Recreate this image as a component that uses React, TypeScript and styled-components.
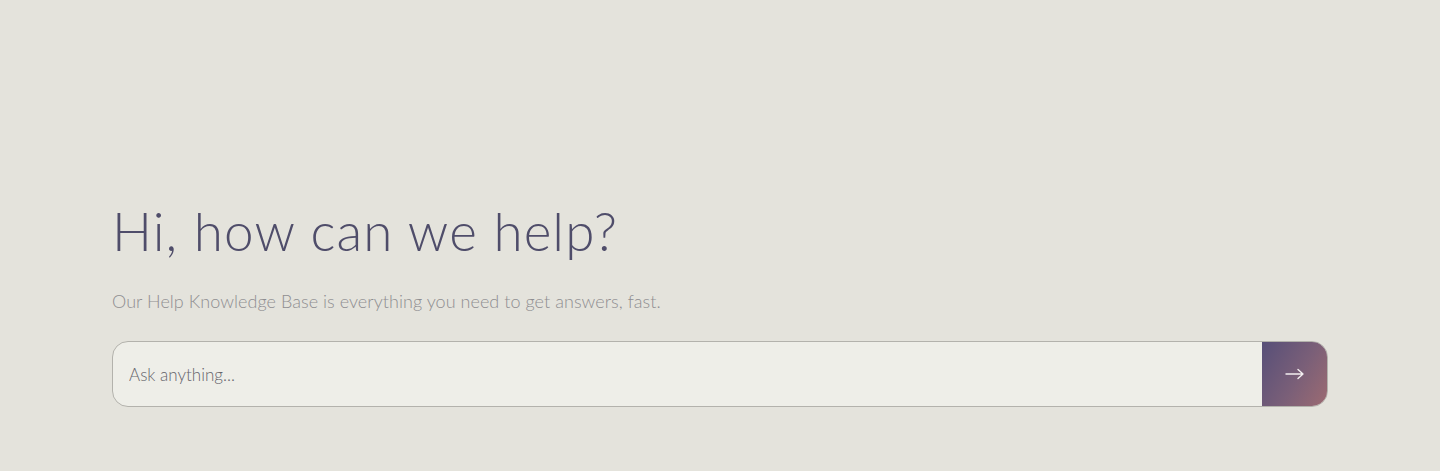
import React from "react";
import styled, { createGlobalStyle } from "styled-components";

const Global = createGlobalStyle`
  html, body { margin: 0; padding: 0; background: #e4e3dc; }
  body { font-family: "Lato", "Open Sans", sans-serif; }
  * { box-sizing: border-box; }
`;

const Page = styled.main`
  min-height: 471px;
  background: #e4e3dc;
  padding: 196px 112px 0 112px;
`;

const Hero = styled.section`
  display: flex;
  flex-direction: column;
  width: 1216px;
`;

const Title = styled.h1`
  margin: 0;
  font-family: "Lato", sans-serif;
  font-weight: 300;
  font-size: 53px;
  line-height: 70px;
  color: #4f4d6a;
  letter-spacing: 1.1px;
`;

const Subtitle = styled.p`
  margin: 23px 0 0 0;
  font-family: "Lato", sans-serif;
  font-weight: 300;
  font-size: 18px;
  line-height: 24px;
  color: #8f8e91;
  letter-spacing: 0.05px;
`;

const SearchForm = styled.form`
  margin-top: 28px;
  display: flex;
  height: 66px;
  border: 1px solid #b3b2ac;
  border-radius: 16px;
  background: #eeeee8;
  overflow: hidden;
`;

const SearchInput = styled.input`
  flex: 1;
  border: none;
  outline: none;
  background: transparent;
  padding: 0 16px;
  font-family: "Lato", sans-serif;
  font-weight: 300;
  font-size: 17px;
  color: #4f4d6a;
  &::placeholder { color: #65646b; }
`;

const SubmitButton = styled.button`
  width: 65px;
  border: none;
  background: linear-gradient(120deg, #574f78 0%, #7a5f78 55%, #9c6b72 100%);
  display: flex;
  align-items: center;
  justify-content: center;
  cursor: pointer;
  padding: 0;
`;

export default function App() {
  return (
    <>
      <Global />
      <Page>
        <Hero>
          <Title>Hi, how can we help?</Title>
          <Subtitle>Our Help Knowledge Base is everything you need to get answers, fast.</Subtitle>
          <SearchForm onSubmit={(e) => e.preventDefault()}>
            <SearchInput placeholder="Ask anything..." />
            <SubmitButton type="submit" aria-label="Search">
              <svg width="20" height="12" viewBox="0 0 20 12" fill="none">
                <path d="M1 6H18M13 1.5L18 6L13 10.5" stroke="#f3eef0" strokeWidth="1.4" strokeLinecap="round" strokeLinejoin="round" />
              </svg>
            </SubmitButton>
          </SearchForm>
        </Hero>
      </Page>
    </>
  );
}
